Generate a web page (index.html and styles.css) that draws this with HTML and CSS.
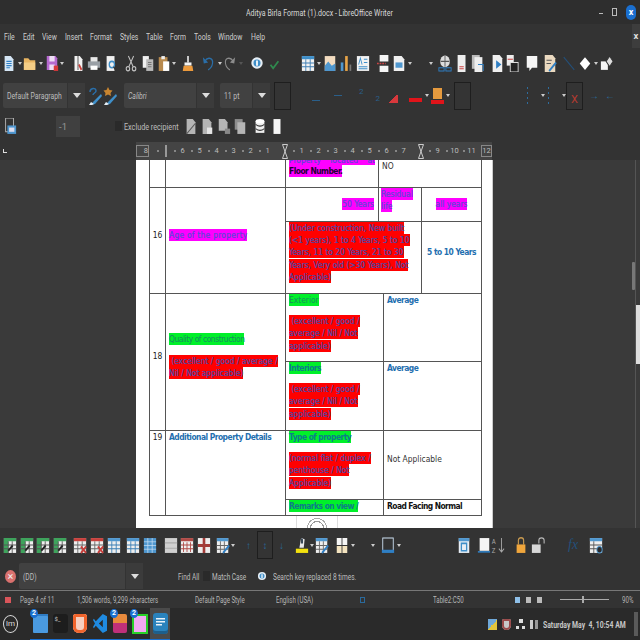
FILE: index.html
```html
<!DOCTYPE html>
<html>
<head>
<meta charset="utf-8">
<title>Aditya Birla Format (1).docx - LibreOffice Writer</title>
<link rel="stylesheet" href="styles.css">
</head>
<body>
<svg class="defs" xmlns="http://www.w3.org/2000/svg">
<symbol id="new" preserveAspectRatio="none" viewBox="0 0 16 16"><path d="M3 1h7l3 3v11H3z" fill="#d5e6f5"/><path d="M5 6h6M5 8h6M5 10h6M5 12h4" stroke="#2f7fc4"/></symbol>
<symbol id="open" preserveAspectRatio="none" viewBox="0 0 16 16"><path d="M1 3h5l2 2h6v9H1z" fill="#e9b562"/><path d="M1 7h13v7H1z" fill="#f5cd85"/></symbol>
<symbol id="save" preserveAspectRatio="none" viewBox="0 0 16 16"><path d="M2 1h10l2 2v11H2z" fill="#b569cf"/><path d="M5 1h6v5H5zM5 9h6v5H5z" fill="#eedcf5"/><path d="M10 10h5v5h-5z" fill="#d8393c"/></symbol>
<symbol id="pdf" preserveAspectRatio="none" viewBox="0 0 16 16"><path d="M4 1h6l3 3v11H4z" fill="#f2f2f2"/><path d="M8 1v13" stroke="#444"/><path d="M9 9l3 5" stroke="#c8403c" stroke-width="2"/></symbol>
<symbol id="print" preserveAspectRatio="none" viewBox="0 0 16 16"><path d="M4 2h8v5H4z" fill="#e9e9e9"/><path d="M1 6h14v6H1z" fill="#9aa0a6"/><path d="M4 10h8v4H4z" fill="#fff"/></symbol>
<symbol id="prev" preserveAspectRatio="none" viewBox="0 0 16 16"><path d="M3 1h9v14H3z" fill="#f0f0f0"/><circle cx="9" cy="9" r="3" fill="none" stroke="#3f8fc9" stroke-width="1.5"/><path d="M11 11l3 4" stroke="#333" stroke-width="1.5"/></symbol>
<symbol id="cut" preserveAspectRatio="none" viewBox="0 0 16 16"><g fill="none" stroke="#c4c4c4" stroke-width="1.2"><circle cx="4.5" cy="13" r="2"/><circle cx="11.5" cy="13" r="2"/><path d="M5.5 11L11 1M10.500 11L5 1"/></g></symbol>
<symbol id="copy" preserveAspectRatio="none" viewBox="0 0 16 16"><path d="M2 1h7v11H2z" fill="#f0f0f0"/><path d="M6 4h8v11H6z" fill="#b9b9b9"/><path d="M8 7h4M8 9h4M8 11h4" stroke="#777"/></symbol>
<symbol id="paste" preserveAspectRatio="none" viewBox="0 0 16 16"><path d="M2 2h10v13H2z" fill="#b88a4e"/><path d="M5 1h4v3H5z" fill="#eee"/><path d="M7 6h7v9H7z" fill="#fff"/></symbol>
<symbol id="brush" preserveAspectRatio="none" viewBox="0 0 16 16"><path d="M7 1h2v6H7z" fill="#ddd"/><path d="M4 7h8v3H4z" fill="#f3f3f3"/><path d="M3 10h10l1 5H2z" fill="#ec9a3c"/></symbol>
<symbol id="undo" preserveAspectRatio="none" viewBox="0 0 16 16"><path d="M3 6c4-5 10-3 9 2-.5 3-3 5-5 6" fill="none" stroke="#2a6ea8" stroke-width="1.4"/><path d="M1 2l1 6 5-1z" fill="#2a6ea8"/></symbol>
<symbol id="redo" preserveAspectRatio="none" viewBox="0 0 16 16"><path d="M13 6C9 1 3 3 4 8c.5 3 3 5 5 6" fill="none" stroke="#8c8c8c" stroke-width="1.2"/><path d="M15 2l-1 6-5-1z" fill="#8c8c8c"/></symbol>
<symbol id="info" viewBox="0 0 16 16"><circle cx="8" cy="8" r="6.500" fill="#e6eef5"/><circle cx="8" cy="8" r="4" fill="#3f8fc9"/><path d="M7 5h2v6H7z" fill="#fff"/></symbol>
<symbol id="check" viewBox="0 0 16 16"><path d="M4 10l3 4 6-8" fill="none" stroke="#2f8a4e" stroke-width="2"/></symbol>
<symbol id="table" preserveAspectRatio="none" viewBox="0 0 16 16"><path d="M1 1h14v14H1z" fill="#f2f2f2"/><path d="M1 1h14v3H1z" fill="#3f8fc9"/><path d="M5.500 4v11M10.500 4v11M1 7.500h14M1 11h14" stroke="#3f7fb5"/></symbol>
<symbol id="image" preserveAspectRatio="none" viewBox="0 0 16 16"><path d="M2 1h12v14H2z" fill="#f3dcc0"/><path d="M2 10l4-4 4 4 4-2v7H2z" fill="#4f97cf"/></symbol>
<symbol id="chart" preserveAspectRatio="none" viewBox="0 0 16 16"><path d="M2 7h3v8H2z" fill="#4f97cf"/><path d="M7 1h3v14H7z" fill="#e9a548"/><path d="M12 9h2v6h-2z" fill="#777"/></symbol>
<symbol id="tbox" preserveAspectRatio="none" viewBox="0 0 16 16"><path d="M1 1h14v14H1z" fill="#f2f2f2"/><path d="M3 9l2-6 2 6" fill="none" stroke="#3f8fc9"/><path d="M9 4h4M9 7h4M3 11h10M3 13h10" stroke="#3f8fc9"/></symbol>
<symbol id="brk" preserveAspectRatio="none" viewBox="0 0 16 16"><path d="M3 0h10v6H3zM3 10h10v6H3z" fill="#f5f5f5"/><path d="M0 8h10" stroke="#c44" stroke-width="1.500" stroke-dasharray="2 1"/></symbol>
<symbol id="field" preserveAspectRatio="none" viewBox="0 0 16 16"><path d="M2 1h9l3 3v11H2z" fill="#f0f0f0"/><path d="M4 7h8v5H4z" fill="#4f97cf"/></symbol>
<symbol id="link" preserveAspectRatio="none" viewBox="0 0 16 16"><circle cx="8" cy="6" r="5.500" fill="#ddd"/><path d="M8 1v10M3 6h10" stroke="#555"/><path d="M1 12h6v3H1zM9 12h6v3H9z" fill="none" stroke="#2f7fc4"/></symbol>
<symbol id="foot" preserveAspectRatio="none" viewBox="0 0 16 16"><path d="M3 0h9v16H3z" fill="#eee"/><path d="M5 11h5M5 13h5" stroke="#c44"/></symbol>
<symbol id="endn" preserveAspectRatio="none" viewBox="0 0 16 16"><path d="M1 0h9v13H1z" fill="#bbb"/><path d="M4 2h9v14H4z" fill="#eee"/><path d="M8 9h6v6" fill="none" stroke="#2f7fc4"/></symbol>
<symbol id="mark" preserveAspectRatio="none" viewBox="0 0 16 16"><path d="M3 0h8l3 3v13H3z" fill="#f0f0f0"/><path d="M7 5l6 4-6 4z" fill="#2f7fc4"/></symbol>
<symbol id="xref" preserveAspectRatio="none" viewBox="0 0 16 16"><path d="M2 0h8v10H2z" fill="#eee"/><path d="M6 7h9v9H6z" fill="#222" stroke="#ddd"/><path d="M3 4h6" stroke="#c44"/></symbol>
<symbol id="note" preserveAspectRatio="none" viewBox="0 0 16 16"><path d="M2 1h12v11H8l-3 3v-3H2z" fill="#f5f5f5"/></symbol>
<symbol id="track" preserveAspectRatio="none" viewBox="0 0 16 16"><path d="M2 0h9l3 3v13H2z" fill="#ead9c0"/><path d="M4 5h6M4 8h5" stroke="#555"/><path d="M7 15l8-8" stroke="#2f7fc4" stroke-width="2"/></symbol>
<symbol id="line" preserveAspectRatio="none" viewBox="0 0 16 16"><path d="M2 2l12 12" stroke="#23507a" stroke-width="1.300"/></symbol>
<symbol id="dia" preserveAspectRatio="none" viewBox="0 0 16 16"><path d="M8 2l6 6-6 6-6-6z" fill="#fff"/></symbol>
<symbol id="draw" preserveAspectRatio="none" viewBox="0 0 16 16"><path d="M1 6h8v8H1z" fill="#f5f5f5"/><path d="M11 1l4 5-4 5-4-5z" fill="#ddd" stroke="#333"/></symbol>
<symbol id="ppos" preserveAspectRatio="none" viewBox="0 0 16 16"><path d="M3 0h9v13H3z" fill="none" stroke="#bbb"/><path d="M5 7h10v8H5z" fill="#4f97cf"/><path d="M7 9h6v4H7z" fill="#dde"/></symbol>
<symbol id="pg1" preserveAspectRatio="none" viewBox="0 0 16 16"><path d="M3 1h7l3 3v11H3z" fill="#b5b5b5"/><path d="M3 15L13 5" stroke="#555"/></symbol>
<symbol id="pg2" preserveAspectRatio="none" viewBox="0 0 16 16"><path d="M3 1h7l3 3v11H3z" fill="#b5b5b5"/><path d="M8 9h6v6H8z" fill="#e5e5e5"/></symbol>
<symbol id="pg3" preserveAspectRatio="none" viewBox="0 0 16 16"><path d="M2 1h7l3 3v8H2z" fill="#b5b5b5"/><path d="M9 10h6v5H9z" fill="#888"/></symbol>
<symbol id="pg4" preserveAspectRatio="none" viewBox="0 0 16 16"><path d="M2 1h9v10H2z" fill="#8d8d8d"/><path d="M5 4h9v11H5z" fill="#b5b5b5"/></symbol>
<symbol id="db" preserveAspectRatio="none" viewBox="0 0 16 16"><path d="M3 3h10v11H3z" fill="#eee"/><path d="M3 6c3 2 7 2 10 0M3 10c3 2 7 2 10 0" fill="none" stroke="#333"/><ellipse cx="8" cy="3" rx="5" ry="2" fill="#fff"/></symbol>
<symbol id="pgw" preserveAspectRatio="none" viewBox="0 0 16 16"><path d="M4 1h8v14H4z" fill="#f5f5f5"/></symbol>
<symbol id="tgreen" preserveAspectRatio="none" viewBox="0 0 16 16"><path d="M1 1h14v14H1z" fill="#eee"/><path d="M1 1h14v3H1zM1 4h5v11H1z" fill="#3ea35c"/><path d="M6 4v11M10.500 4v11M1 7.500h14M1 11h14" stroke="#555"/><path d="M6 13l5-5" stroke="#222" stroke-width="2"/></symbol>
<symbol id="tred" preserveAspectRatio="none" viewBox="0 0 16 16"><path d="M1 1h14v14H1z" fill="#eee"/><path d="M1 1h14v3H1z" fill="#c8403c"/><path d="M5.500 4v11M10.500 4v11M1 7.500h14M1 11h14" stroke="#666"/><path d="M9 9l6 6M15 9l-6 6" stroke="#c8403c" stroke-width="2"/></symbol>
<symbol id="tblue" preserveAspectRatio="none" viewBox="0 0 16 16"><path d="M1 1h14v14H1z" fill="#eee"/><path d="M1 1h14v3H1z" fill="#4f97cf"/><path d="M5.500 4v11M10.500 4v11M1 7.500h14M1 11h14" stroke="#3a7fb5"/></symbol>
<symbol id="tfull" preserveAspectRatio="none" viewBox="0 0 16 16"><path d="M1 1h14v14H1z" fill="#4f97cf"/><path d="M5.500 1v14M10.500 1v14M1 4.500h14M1 8h14M1 11.500h14" stroke="#cfe3f5" stroke-width=".7"/></symbol>
<symbol id="tgray" preserveAspectRatio="none" viewBox="0 0 16 16"><path d="M1 1h14v14H1z" fill="#d0d0d0"/><path d="M1 5.500h14M1 10.500h14" stroke="#aaa"/></symbol>
<symbol id="tdel" preserveAspectRatio="none" viewBox="0 0 16 16"><path d="M1 1h14v14H1z" fill="#eee"/><path d="M1 1h14v3H1z" fill="#b04a46"/><path d="M4 5v9M8 5v9M12 5v9M1 7.500h14M1 11h14" stroke="#b04a46"/></symbol>
<symbol id="tsplit" preserveAspectRatio="none" viewBox="0 0 16 16"><path d="M1 1h14v14H1z" fill="#eee"/><path d="M8 1v14M1 8h14" stroke="#a33c38" stroke-width="3"/></symbol>
<symbol id="hl" preserveAspectRatio="none" viewBox="0 0 16 16"><path d="M7 1l4 1-1 8H5z" fill="#e8e8e8"/><path d="M7 1l2 1v4H7z" fill="#234"/><path d="M1 11h14v4H1z" fill="#f3e20e"/></symbol>
<symbol id="tedit" preserveAspectRatio="none" viewBox="0 0 16 16"><path d="M1 1h13v14H1z" fill="#eee"/><path d="M1 1h13v3H1z" fill="#4f97cf"/><path d="M5 4v11M9.500 4v11M1 8h13M1 11.500h13" stroke="#666"/><path d="M8 15l7-7" stroke="#2f7fc4" stroke-width="2"/></symbol>
<symbol id="split" preserveAspectRatio="none" viewBox="0 0 16 16"><path d="M2 1h5.500v6.500H2zM8.500 1H14v6.500H8.500z" fill="#f5f5f5"/><path d="M2 8.500h5.500V15H2zM8.500 8.500H14V15H8.500z" fill="#f3e3bf"/></symbol>
<symbol id="bbox" preserveAspectRatio="none" viewBox="0 0 16 16"><path d="M2 1h12v12H2z" fill="none" stroke="#cfe3f5"/><path d="M1 12h14v3H1z" fill="#2f7fc4"/></symbol>
<symbol id="colw" preserveAspectRatio="none" viewBox="0 0 16 16"><path d="M2 1h12v14H2z" fill="#e8eef5"/><path d="M2 1h12v3H2z" fill="#4f97cf"/><path d="M5 6h6v7H5z" fill="none" stroke="#3f8fc9" stroke-width="1.500"/></symbol>
<symbol id="rowh" preserveAspectRatio="none" viewBox="0 0 16 16"><path d="M3 1h11v12H3z" fill="#f5f5f5"/><path d="M1 14h14" stroke="#2f7fc4" stroke-width="1.500"/></symbol>
<symbol id="sort" preserveAspectRatio="none" viewBox="0 0 16 16"><text x="1" y="7" font-size="7" fill="#aaa" font-family="Roboto">A</text><text x="1" y="15" font-size="7" fill="#aaa" font-family="Roboto">Z</text><path d="M12 1v13M9 11l3 3 3-3" fill="none" stroke="#aaa"/></symbol>
<symbol id="lock" preserveAspectRatio="none" viewBox="0 0 16 16"><path d="M5 7V3c0-3 6-3 6 0v4" fill="none" stroke="#c89a50" stroke-width="1.300"/><path d="M3 7h10v8H3z" fill="#f0a63c"/></symbol>
<symbol id="unlock" preserveAspectRatio="none" viewBox="0 0 16 16"><path d="M9 6V3c0-3 6-3 6 0v3" fill="none" stroke="#bbb" stroke-width="1.200"/><path d="M1 7h10v8H1z" fill="#d8d8d8"/></symbol>
<symbol id="tfx" preserveAspectRatio="none" viewBox="0 0 16 16"><path d="M1 1h14v14H1z" fill="#eee"/><path d="M1 1h14v3H1z" fill="#4f97cf"/><path d="M5.500 4v11M1 7.500h14M1 11h14" stroke="#555"/><circle cx="12" cy="12" r="3" fill="#2b2b2b" stroke="#4f97cf"/></symbol>
<symbol id="paint1" preserveAspectRatio="none" viewBox="0 0 14 20"><path d="M2 6C2 2 8 1 8 5c0 2-3 2-3 4" fill="none" stroke="#2a6ea8" stroke-width="1.500"/><path d="M13 8L5 16l-2 3 4-1 7-8z" fill="#3f8fc9"/><path d="M3 16l-2 3h3l2-1z" fill="#e6eef5"/></symbol>
<symbol id="paint2" preserveAspectRatio="none" viewBox="0 0 14 20"><path d="M5 1l1.500 3 3 .5-2 2.500.5 3-3-1.500-3 1.500.5-3-2-2.500 3-.5z" fill="#c9852f"/><path d="M13 8L5 16l-2 3 4-1 7-8z" fill="#3f8fc9"/><path d="M3 16l-2 3h3l2-1z" fill="#e6eef5"/></symbol>
<symbol id="glass" preserveAspectRatio="none" viewBox="0 0 6 15"><path d="M.5.500h5L.5 14.500h5z" fill="none" stroke="#ccc"/></symbol>
</svg>

<div class="title-bar">
  <span class="title">Aditya Birla Format (1).docx - LibreOffice Writer</span>
  <span class="win-ctl">
    <span class="win-min"></span>
    <span class="win-max"></span>
    <span class="win-close">x</span>
  </span>
</div>

<div class="menu-bar">
  <span>File</span><span>Edit</span><span>View</span><span>Insert</span><span>Format</span><span>Styles</span><span>Table</span><span>Form</span><span>Tools</span><span>Window</span><span>Help</span>
  <span class="doc-x">x</span>
</div>

<div class="tool tool1">
  <svg class="ic"><use href="#new"/></svg><i class="car g2"></i>
  <svg class="ic g1"><use href="#open"/></svg><i class="car g2"></i>
  <svg class="ic g2"><use href="#save"/></svg><i class="car g1"></i>
  <svg class="ic g7"><use href="#pdf"/></svg>
  <svg class="ic g2"><use href="#print"/></svg>
  <svg class="ic g3"><use href="#prev"/></svg>
  <svg class="ic g6"><use href="#cut"/></svg>
  <svg class="ic g3"><use href="#copy"/></svg>
  <svg class="ic g2"><use href="#paste"/></svg><i class="car g1"></i>
  <svg class="ic g5"><use href="#brush"/></svg>
  <svg class="ic g7"><use href="#undo"/></svg><i class="car g2"></i>
  <svg class="ic"><use href="#redo"/></svg><i class="car dim g3"></i>
  <svg class="ic round g7"><use href="#info"/></svg>
  <svg class="ic round g3"><use href="#check"/></svg>
  <svg class="ic g20"><use href="#table"/></svg><i class="car g2"></i>
  <svg class="ic g2"><use href="#image"/></svg>
  <svg class="ic g2"><use href="#chart"/></svg>
  <svg class="ic g3"><use href="#tbox"/></svg>
  <svg class="ic g7"><use href="#brk"/></svg>
  <svg class="ic g1"><use href="#field"/></svg><i class="car g2"></i>
  <i class="car g17"></i>
  <svg class="ic g5"><use href="#link"/></svg>
  <svg class="ic g3"><use href="#foot"/></svg>
  <svg class="ic g2"><use href="#endn"/></svg>
  <svg class="ic g5"><use href="#mark"/></svg>
  <svg class="ic g1"><use href="#xref"/></svg>
  <svg class="ic g6"><use href="#note"/></svg>
  <svg class="ic g4"><use href="#track"/></svg>
  <svg class="ic g5"><use href="#line"/></svg>
  <svg class="ic g2"><use href="#dia"/></svg><i class="car g2"></i>
  <svg class="ic g2"><use href="#draw"/></svg>
</div>

<div class="tool tool2">
  <div class="combo style-box"><span>Default Paragraph</span><b><i class="car big"></i></b></div>
  <svg class="paint g3"><use href="#paint1"/></svg><svg class="paint g1"><use href="#paint2"/></svg>
  <div class="combo font-box"><span class="ital">Calibri</span><b><i class="car big"></i></b></div>
  <div class="combo size-box"><span>11 pt</span><b><i class="car big"></i></b></div>
  <span class="off-box b1"></span>
  <span class="dash d1"></span>
  <span class="dash d2"></span>
  <span class="sup">2</span>
  <span class="sub">2</span>
  <span class="pen"></span>
  <span class="red-bar"></span><i class="car g3"></i>
  <span class="hl-wrap"><span class="swatch"></span><span class="red-bar"></span></span><i class="car g2"></i>
  <span class="off-box b2"></span>
  <span class="dots d-a"></span><i class="car g13"></i>
  <span class="dots d-b"></span><i class="car g13"></i>
  <span class="off-box b3"><span class="redx">X</span></span>
  <span class="arr a1">&#8594;</span>
  <span class="arr a2">&#8592;</span>
</div>

<div class="tool tool3">
  <svg class="ic g3"><use href="#ppos"/></svg>
  <span class="num-in">-1</span>
  <span class="chk ex"></span>
  <span class="lbl ex-lbl">Exclude recipient</span>
  <svg class="ic g8"><use href="#pg1"/></svg>
  <svg class="ic g2"><use href="#pg2"/></svg>
  <svg class="ic g3"><use href="#pg3"/></svg>
  <svg class="ic g2"><use href="#pg4"/></svg>
  <svg class="ic g6"><use href="#db"/></svg>
  <svg class="ic g3"><use href="#pgw"/></svg>
</div>

<div class="ruler-row">
  <span class="corner"></span>
  <div class="ruler">
    <span class="box first">8</span><span class="mark"></span><span>6</span><span>5</span><span>4</span><span>3</span><span>2</span><span>1</span><span class="glass"><svg><use href="#glass"/></svg></span>
    <span>1</span><span>2</span><span>3</span><span>4</span><span>5</span><span>6</span><span>7</span><span class="glass"><svg><use href="#glass"/></svg></span><span>9</span><span>10</span><span>11</span><span class="box last">12</span>
  </div>
</div>

<div class="doc-area">
  <div class="page">
    <table class="sheet">
      <colgroup><col class="c1"><col class="c2"><col class="c3"><col class="c4"><col class="c5"><col class="c6"></colgroup>
      <tr class="r1">
        <td></td><td></td>
        <td class="tight"><div class="clip"><span class="mg jst">Property located at</span><span class="mg blk">Floor Number.</span></div></td>
        <td colspan="3" class="plain">NO</td>
      </tr>
      <tr class="r2">
        <td rowspan="2" class="mid num up">16</td>
        <td rowspan="2" class="mid up"><span class="mg age">Age of the property</span></td>
        <td class="right"><span class="mg">50 Years</span></td>
        <td colspan="2" class="flush"><span class="mg">Residual<br>life</span></td>
        <td class="center"><span class="mg">all years</span></td>
      </tr>
      <tr class="r3">
        <td colspan="3" class="tight"><span class="rd">(Under construction, New built<br>(&lt;1 years), 1 to 4 Years, 5 to 10<br>Years, 11 to 20 Years, 21 to 30<br>Years, Very old (&gt;30 Years), Not<br>Applicable)</span></td>
        <td class="center mid hd up">5 to 10 Years</td>
      </tr>
      <tr class="r4">
        <td rowspan="2" class="mid num up">18</td>
        <td rowspan="2" class="mid up"><span class="gr qual">Quality of construction</span><p class="gap"><span class="rd">&nbsp;(excellent / good / average /<br>Nil / Not applicable)</span></p></td>
        <td colspan="2" class="tight"><span class="gr">Exterior</span><p class="gap"><span class="rd">&nbsp;(excellent / good /<br>average / Nil / Not<br>applicable)</span></p></td>
        <td colspan="2" class="hd">Average</td>
      </tr>
      <tr class="r5">
        <td colspan="2" class="tight"><span class="gr bd">Interiors</span><p class="gap"><span class="rd">&nbsp;(excellent / good /<br>average / Nil / Not<br>applicable)</span></p></td>
        <td colspan="2" class="hd">Average</td>
      </tr>
      <tr class="r6">
        <td rowspan="2" class="num">19</td>
        <td rowspan="2" class="hd">Additional Property Details</td>
        <td colspan="2" class="tight"><span class="gr bd">Type of property</span><p class="gap"><span class="rd">(normal flat / duplex /<br>penthouse / Not<br>Applicable)</span></p></td>
        <td colspan="2" class="mid plain up">Not Applicable</td>
      </tr>
      <tr class="r7">
        <td colspan="2" class="tight"><span class="gr bd">Remarks on view /</span></td>
        <td colspan="2" class="blk-b">Road Facing Normal</td>
      </tr>
    </table>
    <div class="page-foot"><span class="stamp"></span></div>
  </div>
  <div class="v-scroll"><span class="thumb"></span><span class="thumb2"></span></div>
</div>

<div class="tool tool4">
  <svg class="ic g3"><use href="#tgreen"/></svg>
  <svg class="ic g3"><use href="#tgreen"/></svg>
  <svg class="ic g2"><use href="#tgreen"/></svg>
  <svg class="ic g3"><use href="#tgreen"/></svg>
  <svg class="ic g6"><use href="#tred"/></svg>
  <svg class="ic g3"><use href="#tred"/></svg>
  <svg class="ic g3"><use href="#tblue"/></svg>
  <svg class="ic g5"><use href="#tblue"/></svg>
  <svg class="ic g3"><use href="#tfull"/></svg>
  <svg class="ic g7"><use href="#tgray"/></svg>
  <svg class="ic g2"><use href="#tdel"/></svg>
  <svg class="ic g3"><use href="#tsplit"/></svg>
  <svg class="ic g5"><use href="#tedit"/></svg><i class="car g1"></i>
  <span class="arr a3">&#8593;</span>
  <span class="off-box b4"><span class="arr">&#8597;</span></span>
  <span class="arr a4">&#8595;</span>
  <svg class="ic g11"><use href="#hl"/></svg><i class="car g1"></i>
  <svg class="ic g1"><use href="#tedit"/></svg>
  <svg class="ic g6"><use href="#split"/></svg><i class="car g2"></i>
  <i class="car g16"></i>
  <svg class="ic g6"><use href="#bbox"/></svg><i class="car g2"></i>
  <svg class="ic g56"><use href="#colw"/></svg>
  <svg class="ic g6"><use href="#rowh"/></svg>
  <svg class="ic"><use href="#sort"/></svg>
  <svg class="ic g9"><use href="#lock"/></svg>
  <svg class="ic g3"><use href="#unlock"/></svg>
  <span class="fx">fx</span>
  <svg class="ic g7"><use href="#tfx"/></svg>
</div>

<div class="find-bar">
  <span class="err">&#215;</span>
  <div class="combo find-box"><span>(DD)</span><b><i class="car big"></i></b></div>
  <span class="find-all">Find All</span>
  <span class="chk mc"></span>
  <span class="lbl mc-lbl">Match Case</span>
  <svg class="inf"><use href="#info"/></svg>
  <span class="lbl srch">Search key replaced 8 times.</span>
</div>

<div class="status-bar">
  <span class="st-ic"></span>
  <span class="s1">Page 4 of 11</span>
  <span class="s2">1,506 words, 9,299 characters</span>
  <span class="s3">Default Page Style</span>
  <span class="s4">English (USA)</span>
  <span class="st-sel"></span>
  <span class="s5">Table2:C50</span>
  <span class="views"><i class="on"></i><i></i><i></i></span>
  <span class="zoom"><i></i></span>
  <span class="s6">90%</span>
</div>

<div class="taskbar">
  <span class="mint"><span>lm</span></span>
  <div class="apps">
    <span class="app"><span class="folder"></span><b class="bdg">2</b></span>
    <span class="app"><span class="term">$_</span></span>
    <span class="app"><span class="brave"></span></span>
    <span class="app"><span class="vsc"></span></span>
    <span class="app"><span class="photo"></span><b class="bdg">2</b></span>
    <span class="app"><span class="pdfapp"></span><b class="bdg">2</b></span>
    <span class="app cur"><span class="writer"></span></span>
  </div>
  <div class="tray">
    <span class="t-a"></span>
    <span class="t-b"></span>
    <span class="t-c"></span>
    <span class="t-d"></span>
    <span class="clock">Saturday May &nbsp;4, 10:54 AM</span>
    <span class="t-e"></span>
  </div>
</div>
</body>
</html>
```

FILE: styles.css
```css
* {box-sizing:border-box;}
html,body {margin:0;padding:0;}
body {width:640px;height:640px;overflow:hidden;background:#333;color:#c8c8c8;font-family:Roboto,"Liberation Sans",sans-serif;font-size:9.5px;white-space:nowrap;}
.defs {display:none;}

/* the screenshot's ui font is much narrower than Roboto */
.title,.menu-bar span:not(.doc-x),.combo span,.lbl,.find-all,.status-bar span[class^="s"]:not(.st-ic):not(.st-sel),.clock {transform:scaleX(.72);transform-origin:left center;}

/* window top */
.title-bar {height:24px;background:#2e2e2e;display:flex;align-items:center;}
.title {margin-left:246px;width:148px;color:#d8d8d8;transform:scaleX(.74);}
.win-ctl {margin-left:auto;display:flex;align-items:center;}
.win-min {width:4px;height:1px;background:#bbb;margin-right:9px;margin-top:3px;}
.win-max {width:5px;height:8px;border:1px solid #bbb;margin-right:9px;}
.win-close {width:10px;height:15px;border-radius:6px;background:#1a6fd0;color:#fff;font-size:9px;font-weight:bold;text-align:center;line-height:14px;margin-right:4px;}
.menu-bar {height:24px;background:#333;display:flex;align-items:center;gap:8px;padding-left:4px;color:#cfcfcf;}
.menu-bar span {flex:none;width:16px;}
.menu-bar span:nth-child(1),.menu-bar span:nth-child(2) {width:11px;}
.menu-bar span:nth-child(3) {width:15px;}
.menu-bar span:nth-child(4) {width:17px;}
.menu-bar span:nth-child(5) {width:22px;}
.menu-bar span:nth-child(6) {width:18px;}
.menu-bar span:nth-child(10) {width:25px;}
.menu-bar .doc-x {margin-left:auto;background:#3d3d3d;width:8px;height:24px;line-height:24px;text-align:center;font-weight:bold;color:#ddd;}

/* toolbars */
.tool {display:flex;align-items:center;background:#333;}
.tool1 {height:33px;padding:0 0 3px 2px;}
.tool2 {height:29px;padding-left:3px;}
.tool3 {height:32px;}
.tool4 {height:34px;}
.ic {width:14px;height:17px;flex:none;display:block;}
.ic.round {height:14px;}
.car {flex:none;width:0;height:0;border-left:2.5px solid transparent;border-right:2.5px solid transparent;border-top:3px solid #ccc;display:block;}
.car.dim {border-top-color:#555;}
.car.big {border-left-width:4px;border-right-width:4px;border-top-width:5px;border-top-color:#ddd;}
.g1 {margin-left:1px;}
.g2 {margin-left:2px;}
.g3 {margin-left:3px;}
.g4 {margin-left:4px;}
.g5 {margin-left:5px;}
.g6 {margin-left:6px;}
.g7 {margin-left:7px;}
.g8 {margin-left:8px;}
.g9 {margin-left:9px;}
.g11 {margin-left:11px;}
.g13 {margin-left:13px;}
.g16 {margin-left:16px;}
.g17 {margin-left:17px;}
.g20 {margin-left:20px;}
.g56 {margin-left:56px;}

.combo {display:flex;height:25px;background:#414141;border-radius:2px;align-items:center;flex:none;}
.combo span {flex:1;min-width:0;padding-left:5.500px;color:#bdbdbd;}
.combo b {width:18px;flex:none;height:100%;background:#3b3b3b;border-left:1px solid #333;display:flex;align-items:center;justify-content:center;}
.style-box {width:82px;}
.font-box {width:90px;margin-left:7px;}
.size-box {width:50px;margin-left:6px;}
.ital {font-style:italic;}
.paint {flex:none;display:block;width:14px;height:20px;}
.off-box {flex:none;display:flex;align-items:center;justify-content:center;border:1px solid #1e1e1e;background:#343434;height:28px;}
.b1 {width:17px;margin-left:4px;}
.b2 {width:17px;margin-left:4px;}
.b3 {width:17px;flex-direction:column;}
.b4 {width:16px;height:28px;margin-left:6px;}
.redx {color:#b33a30;font-size:11px;margin-top:8px;}
.dash {flex:none;height:1px;background:#2a5f8a;}
.d1 {width:8px;margin-left:21px;margin-top:10px;}
.d2 {width:8px;margin-left:14px;}
.sup,.sub {flex:none;color:#2a5f8a;font-size:8px;}
.sup {margin-left:17px;margin-top:-8px;}
.sub {margin-left:12px;margin-top:6px;}
.pen {flex:none;width:10px;height:8px;margin-left:8px;margin-top:6px;background:linear-gradient(135deg,transparent 45%,#d8383c 45%);}
.red-bar {display:block;flex:none;width:13px;height:4px;background:#e0141a;margin-left:11px;margin-top:9px;}
.hl-wrap {flex:none;width:14px;display:flex;flex-direction:column;align-items:center;margin-left:1px;}
.hl-wrap .red-bar {margin:1px 0 0;}
.swatch {width:9px;height:11px;background:#e59a3e;}
.dots {flex:none;width:1px;height:18px;margin-left:56px;background:repeating-linear-gradient(180deg,#2f6c9c 0 2px,transparent 2px 5px);}
.d-b {margin-left:3px;}
.arr {flex:none;color:#2a6a9c;font-size:10px;}
.a1 {margin-left:6px;}
.a2 {margin-left:6px;}
.a3 {margin-left:11px;}
.a4 {margin-left:6px;}
.fx {flex:none;width:14px;margin-left:23px;color:#23507a;font-family:"Liberation Serif",serif;font-style:italic;font-size:14px;}

.num-in {flex:none;width:24px;height:21px;background:#404040;margin-left:39px;padding-left:3px;line-height:21px;color:#999;}
.chk {flex:none;display:block;width:7px;height:10px;background:#2a2a2a;}
.ex {margin-left:35px;}
.lbl {flex:none;color:#bdbdbd;margin-left:2px;}
.ex-lbl {width:52px;transform:scaleX(.76);}
.mc-lbl {width:34px;transform:scaleX(.68);}

/* ruler */
.ruler-row {height:18px;background:#333;position:relative;display:flex;padding-left:136px;}
.corner {position:absolute;left:3px;top:7px;width:4px;height:4px;border-left:1px solid #ddd;border-bottom:1px solid #ddd;}
.ruler {width:356px;height:18px;overflow:hidden;background:#444;display:flex;align-items:center;}
.ruler span {flex:none;width:17px;text-align:center;font-size:7.500px;color:#bdbdbd;height:12px;line-height:12px;background:radial-gradient(circle,#888 0 .7px,transparent 1px) no-repeat left center/2px 2px;}
.ruler .box {border:1px solid #888;background:none;height:12px;line-height:10px;}
.ruler .first {width:13px;margin-right:8px;text-align:right;}
.ruler .last {width:11px;margin-left:1px;}
.ruler .mark {position:relative;}
.ruler .mark::after {content:"";position:absolute;left:8px;top:0;width:1.500px;height:12px;background:#999;}
.ruler .glass {height:15px;background:none;display:flex;justify-content:center;}
.glass svg {width:6px;height:15px;display:block;}

/* document */
.doc-area {height:368px;background:#3a3a3a;display:flex;padding-left:136px;overflow:hidden;}
.page {width:357px;height:368px;background:#fff;border-right:1px solid #ccc;padding-left:13px;flex:none;font-family:"DejaVu Sans",sans-serif;font-stretch:condensed;font-size:8.4px;line-height:12.4px;color:#222;}
.sheet {border-collapse:collapse;table-layout:fixed;width:332px;}
.c1 {width:16px;}
.c2 {width:120px;}
.c3 {width:93px;}
.c4 {width:5px;}
.c5 {width:38px;}
.c6 {width:60px;}
.sheet td {border:1px solid #555;padding:0 3px;vertical-align:top;overflow:hidden;}
.sheet tr:first-child td {border-top:none;}
.sheet td.tight {padding:0 3px;}
.sheet td.flush {padding:0 2px;}
.sheet td.mid {vertical-align:middle;}
.sheet td.right {text-align:right;vertical-align:middle;padding-right:4px;}
.sheet td.center {text-align:center;vertical-align:middle;}
.sheet td.num {text-align:center;padding:0;}
.sheet td.up {padding-bottom:10px;}
.r1 {height:27px;}
.r2 {height:34px;}
.r3 {height:72px;}
.r4 {height:68px;}
.r5 {height:69px;}
.r6 {height:69px;}
.r7 {height:16px;}
.clip {height:26px;padding-bottom:9px;overflow:hidden;display:flex;flex-direction:column;justify-content:flex-end;align-items:flex-start;}
.mg,.rd,.gr {padding:1px 0;}
.mg {background:#ff00ff;color:#5a48d6;-webkit-text-stroke:.2px #5a48d6;}
.rd {background:#ff0000;color:#4a48a8;-webkit-text-stroke:.2px #4a48a8;}
.gr {background:#00f02a;color:#188a62;}
.bd {font-weight:bold;color:#0e7c8a;letter-spacing:-.5px;}
.clip .blk {color:#220033;font-weight:bold;letter-spacing:-.5px;padding:0;-webkit-text-stroke:0;}
/* only the lower part of this line shows, the rest is on the previous page */
.clip .jst {width:86px;white-space:normal;text-align:justify;text-align-last:justify;padding:0;height:5px;line-height:1px;overflow:hidden;}
.age {letter-spacing:.25px;}
.qual {letter-spacing:-.45px;}
.gap {margin:9px 0 0;}
.hd {color:#1f6fb0;font-weight:bold;letter-spacing:-.5px;}
.plain {color:#333;}
.blk-b {color:#111;font-weight:bold;letter-spacing:-.55px;}
.page-foot {height:13px;display:flex;justify-content:center;overflow:hidden;}
.stamp {width:42px;height:13px;margin-left:-8px;border:1px solid #ddd;border-top:none;background:radial-gradient(circle at 50% 100%,transparent 0 6px,#999 6px 7px,transparent 7px 9px,#aaa 9px 10px,transparent 10px);}
.v-scroll {margin-left:auto;width:8px;position:relative;}
.thumb {position:absolute;left:0;top:102px;width:3px;height:28px;background:#777;border-radius:1px;}
.thumb2 {position:absolute;left:4px;top:145px;width:4px;height:59px;background:#ddd;}
.v-scroll::before {content:"";position:absolute;left:3px;top:0;width:1px;height:100%;background:#555;}

/* find */
.find-bar {height:29px;background:#333;display:flex;align-items:center;border-bottom:1px solid #777;}
.err {flex:none;width:11px;height:13px;margin-left:5px;border-radius:50%;background:#d9716e;color:#eee;font-size:11px;line-height:13px;text-align:center;}
.find-box {width:124px;height:26px;margin-left:3px;}
.find-all {margin-left:35px;width:25px;color:#bdbdbd;transform:scaleX(.68);}
.inf {flex:none;width:10px;height:10px;margin-left:11px;}
.srch {margin-left:6px;transform:scaleX(.69);}

/* status */
.status-bar {height:17px;background:#333;display:flex;align-items:center;font-size:9px;color:#b5b5b5;}
.status-bar span[class^="s"]:not(.st-ic):not(.st-sel) {transform:scaleX(.68);}
.st-ic {flex:none;width:6px;height:6px;background:#d9555a;margin-left:5px;}
.s1 {margin-left:9px;width:57px;}
.s2 {width:118px;}
.s3 {width:81px;}
.s4 {width:84px;}
.st-sel {flex:none;width:5px;height:6px;border:1px solid #2a6a9c;}
.s5 {margin-left:68px;width:82px;}
.views {display:flex;gap:6px;width:40px;}
.views i {display:block;width:5px;height:6px;background:#bbb;}
.views .on {background:#8fc0e8;}
.zoom {flex:none;width:49px;height:1px;background:#aaa;position:relative;margin-left:5px;}
.zoom i {position:absolute;left:22px;top:-3px;width:2px;height:7px;background:#aaa;}
.s6 {margin-left:auto;margin-right:5px;width:13px;}

/* taskbar */
.taskbar {height:32px;background:#2a2a2a;display:flex;align-items:stretch;}
.mint {flex:none;width:30px;padding-left:3px;display:flex;align-items:center;}
.mint span {width:15px;height:18px;border-radius:50%;border:1.500px solid #ddd;color:#ddd;font-size:8px;line-height:15px;text-align:center;}
.apps {display:flex;}
.app {flex:none;width:20px;position:relative;display:flex;align-items:center;justify-content:center;border-bottom:1px solid #1a6fd0;}
.app.cur {background:#4a4a4a;}
.bdg {position:absolute;left:0;top:1px;width:8px;height:9px;border-radius:50%;background:#1a6fd0;color:#fff;font-size:7px;line-height:9px;text-align:center;}
.folder {width:15px;height:19px;background:#4a9ae0;border-radius:1px;box-shadow:inset 0 2px 0 #2f7cc4;}
.term {width:15px;height:19px;background:#1d1d1d;border-radius:3px;color:#ccc;font-size:6px;line-height:9px;padding-left:2px;}
.brave {width:14px;height:19px;background:#f0642c;border-radius:3px 3px 6px 6px;box-shadow:inset 0 0 0 3px #f0642c,inset 0 0 0 10px #f5cfc0;}
.vsc {width:14px;height:19px;background:#1f8ae0;clip-path:polygon(70% 0,100% 12%,100% 88%,70% 100%,20% 62%,6% 75%,0 68%,14% 50%,0 32%,6% 25%,20% 38%,70% 0,70% 30%,42% 50%,70% 70%);}
.photo {width:14px;height:19px;border-radius:2px;background:linear-gradient(180deg,#e88a3c 0 45%,#c0307a 45%);}
.pdfapp {width:16px;height:20px;background:#f2a9f2;border:2px solid #28d028;}
.writer {width:15px;height:21px;border-radius:3px;background:#2a83bd;box-shadow:inset 0 -3px 0 #1d5f8c;background-image:linear-gradient(#eaf3fa,#eaf3fa),linear-gradient(#eaf3fa,#eaf3fa),linear-gradient(#eaf3fa,#eaf3fa);background-size:9px 1.500px,9px 1.500px,6px 1.500px;background-position:3px 5px,3px 8px,3px 11px;background-repeat:no-repeat;}
.tray {margin-left:auto;display:flex;align-items:center;gap:5px;padding-right:2px;}
.t-a {width:9px;height:11px;background:linear-gradient(135deg,#6fa8d8 0 50%,#e3c53a 50%);}
.t-b {width:9px;height:11px;background:#c9c9c9;border-radius:2px 2px 5px 5px;box-shadow:inset 0 0 0 2px #9b4b4b;}
.t-c {width:9px;height:10px;background:linear-gradient(#ddd,#ddd) center top/4px 4px no-repeat,linear-gradient(#ddd,#ddd) left bottom/3px 3px no-repeat,linear-gradient(#ddd,#ddd) right bottom/3px 3px no-repeat;}
.t-d {width:8px;height:9px;background:linear-gradient(90deg,#ccc 0 40%,transparent 40% 60%,#999 60%);}
.clock {width:83px;font-weight:bold;color:#c8c8c8;margin-right:3px;}
.t-e {width:4px;height:24px;background:#5a5a5a;}
```
